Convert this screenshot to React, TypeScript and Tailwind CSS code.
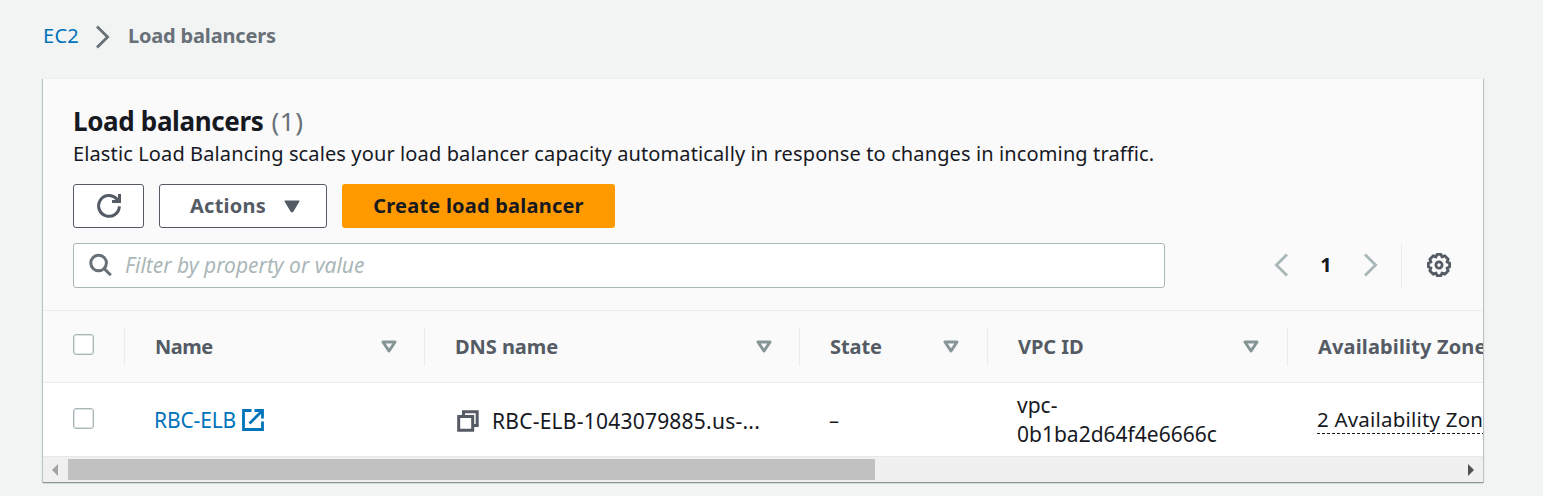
import type { ReactNode } from 'react';

function Chevron({ left = false, className }: { left?: boolean; className: string }) {
  return (
    <svg viewBox="0 0 14 24" className={className} fill="none" stroke="currentColor" strokeWidth="2.8">
      <path d={left ? 'M13 1.4 2.4 12 13 22.6' : 'M1 1.4 11.6 12 1 22.6'} />
    </svg>
  );
}

function RefreshIcon() {
  return (
    <svg viewBox="0 0 26 26" className="h-[26px] w-[26px]" fill="none" stroke="#545b64" strokeWidth="3">
      <path d="M23.4 13.4A10.4 10.4 0 1 1 20.4 5.6L22.6 8" />
      <path d="M23.5 1v7.5H16" />
    </svg>
  );
}

function SearchIcon() {
  return (
    <svg viewBox="0 0 24 24" className="h-6 w-6" fill="none" stroke="#687078" strokeWidth="3">
      <circle cx="10.6" cy="10" r="7.8" />
      <path d="m16.2 15.6 6.6 6.6" />
    </svg>
  );
}

function GearIcon() {
  return (
    <svg viewBox="-12 -12 24 24" className="h-6 w-6" fill="none" stroke="#545b64" strokeWidth="2.8" strokeLinejoin="round">
      <path d="M-2-10.6h4L3-8l2.7-1.3 3.5 3.5L8-3l2.6 1v4L8 3l1.2 2.8-3.5 3.5L3 8l-1 2.6h-4L-3 8l-2.7 1.3-3.5-3.5L-8 3l-2.6-1v-4L-8-3l-1.2-2.8 3.5-3.5L-3-8z" />
      <circle r="3.1" />
    </svg>
  );
}

function ExternalIcon() {
  return (
    <svg viewBox="0 0 22 22" className="h-[22px] w-[22px] shrink-0" fill="none" stroke="#0073bb" strokeWidth="2.8">
      <path d="M9.5 1.5h-8v19h19v-8M12.5 1.5h8v8M20 2 7.5 14.5" />
    </svg>
  );
}

function CopyIcon() {
  return (
    <svg viewBox="0 0 22 22" className="mt-px h-[22px] w-[22px] shrink-0" fill="none" stroke="#545b64" strokeWidth="3">
      <path d="M6.5 6V1.8h13.7v13.7h-4" />
      <path d="M1.7 6.5h14v13.8h-14z" />
    </svg>
  );
}

function SortIcon() {
  return (
    <svg viewBox="0 0 16 13" className="mb-px h-[13px] w-4 shrink-0" fill="none" stroke="#879596" strokeWidth="3" strokeLinejoin="round">
      <path d="M2 2h12L8 11z" />
    </svg>
  );
}

function Checkbox() {
  return <span className="block h-[21px] w-[21px] rounded-[3px] border border-[#aab7b8] bg-white outline outline-[#aab7b8]/40 -outline-offset-2" />;
}

function HeaderCell({ label, className }: { label: ReactNode; className: string }) {
  return (
    <div className={`flex h-[38px] shrink-0 items-center justify-between border-l border-[#eaeded] pl-[30px] pt-px font-bold text-[#545b64] ${className}`}>
      {label}
      <SortIcon />
    </div>
  );
}

export default function App() {
  return (
    <div className="h-[496px] w-[1543px] overflow-hidden bg-[#f2f4f4] px-[43px] font-['Noto_Sans','Open_Sans',sans-serif] text-[20px] leading-[30px] text-[#16191f]">
      <nav className="flex h-[78px] items-start pt-[20px]">
        <span className="w-[36px] pt-px tracking-[0.3px] text-[#0073bb]">EC2</span>
        <Chevron className="ml-[17px] mt-[5px] h-6 w-[14px] text-[#687078]" />
        <span className="ml-[18px] pt-px font-bold tracking-[-0.18px] text-[#687078]">Load balancers</span>
      </nav>

      <main className="flex h-[404px] w-[1440px] flex-col overflow-hidden bg-[#fafafa] shadow-[0_1px_1px_0_#879596,1px_1px_1px_0_#c5cccc,-1px_1px_1px_0_#c5cccc]">
        <header className="h-[233px] shrink-0 border-b border-t border-[#eaeded] pl-[30px] pt-[26px]">
          <h1 className="flex h-[32px] items-center gap-[8px] whitespace-nowrap text-[26px] leading-8">
            <span className="font-bold tracking-[-0.35px]">Load balancers</span>
            <span className="tracking-[0.5px] text-[#687078]">(1)</span>
          </h1>
          <p className="h-[47px] whitespace-nowrap pt-[2px] tracking-[0.12px]">
            Elastic Load Balancing scales your load balancer capacity automatically in response to changes in incoming traffic.
          </p>
          <div className="flex gap-[15px]">
            <button className="flex h-[44px] w-[71px] items-center justify-center rounded-[3px] border border-[#545b64] bg-white">
              <RefreshIcon />
            </button>
            <button className="flex h-[44px] w-[168px] items-center rounded-[3px] border border-[#545b64] bg-white pl-[30px] font-bold tracking-[0.25px] text-[#545b64]">
              <span className="w-[94px] text-left">Actions</span>
              <svg viewBox="0 0 16 13" className="h-[13px] w-4" fill="#545b64">
                <path d="M1.4.5h13.2q1.6 0 .7 1.3L9.3 11.7Q8 13.2 6.7 11.7L.7 1.8Q-.2.5 1.4.5z" />
              </svg>
            </button>
            <button className="h-[44px] w-[273px] rounded-[3px] bg-[#ff9900] font-bold tracking-[0.22px]">Create load balancer</button>
          </div>
          <div className="mt-[15px] flex h-[45px] items-center">
            <div className="flex h-[45px] w-[1092px] items-center rounded-[3px] border border-[#aab7b8] bg-white pb-px pl-[14px]">
              <SearchIcon />
              <span className="ml-[13px] text-[21px] italic tracking-[-0.01px] text-[#aab7b8]">Filter by property or value</span>
            </div>
            <Chevron left className="mb-px ml-[109px] h-6 w-[14px] text-[#aab7b8]" />
            <span className="w-[76px] pb-[2px] text-center font-bold">1</span>
            <Chevron className="mb-px h-6 w-[14px] text-[#aab7b8]" />
            <span className="ml-[23px] h-[45px] w-px bg-[#eaeded]" />
            <span className="mb-[2px] ml-[25px]">
              <GearIcon />
            </span>
          </div>
        </header>

        <div className="flex h-[72px] shrink-0 items-center border-b border-[#eaeded] whitespace-nowrap">
          <div className="w-[81px] shrink-0 pb-[5px] pl-[30px]">
            <Checkbox />
          </div>
          <HeaderCell label="Name" className="w-[300px] pr-[27px] tracking-[-0.5px]" />
          <HeaderCell label="DNS name" className="w-[375px] pr-[27px] tracking-[-0.05px]" />
          <HeaderCell label="State" className="w-[188px] pr-[28px] tracking-[-0.1px]" />
          <HeaderCell label="VPC ID" className="w-[300px] pr-[28px] tracking-[-0.05px]" />
          <HeaderCell label="Availability Zones" className="w-[300px] pr-[28px] tracking-[0.15px]" />
        </div>

        <div className="flex h-[73px] shrink-0 items-center bg-white whitespace-nowrap">
          <div className="w-[111px] shrink-0 pb-[3px] pl-[30px]">
            <Checkbox />
          </div>
          <div className="flex w-[303px] shrink-0 items-center text-[#0073bb]">
            <span className="w-[88px] text-[21px] tracking-[-0.15px]">RBC-ELB</span>
            <ExternalIcon />
          </div>
          <div className="flex w-[372px] shrink-0 items-center pt-[2px]">
            <CopyIcon />
            <span className="ml-[13px] text-[21px] tracking-[0.23px]">RBC-ELB-1043079885.us-...</span>
          </div>
          <div className="w-[188px] shrink-0 pt-[3px]">–</div>
          <div className="w-[300px] shrink-0 pt-px text-[21px] leading-[29px]">
            vpc-
            <br />
            0b1ba2d64f4e6666c
          </div>
          <div className="shrink-0">
            <span className="block h-[28px] border-b border-dashed border-[#16191f] text-[20.5px] leading-[26px] tracking-[0.2px]">2 Availability Zones</span>
          </div>
        </div>

        <div className="flex h-[26px] shrink-0 items-center border-t border-[#e6e9e9] bg-[#f0f0f0]">
          <svg viewBox="0 0 6 12" className="ml-[9px] h-3 w-1.5" fill="#a3a3a3">
            <path d="M6 0v12L0 6z" />
          </svg>
          <span className="ml-[10px] h-[21px] w-[807px] bg-[#c1c1c1]" />
          <svg viewBox="0 0 6 12" className="ml-auto mr-[9px] h-3 w-1.5" fill="#505050">
            <path d="M0 0v12l6-6z" />
          </svg>
        </div>
      </main>
    </div>
  );
}
